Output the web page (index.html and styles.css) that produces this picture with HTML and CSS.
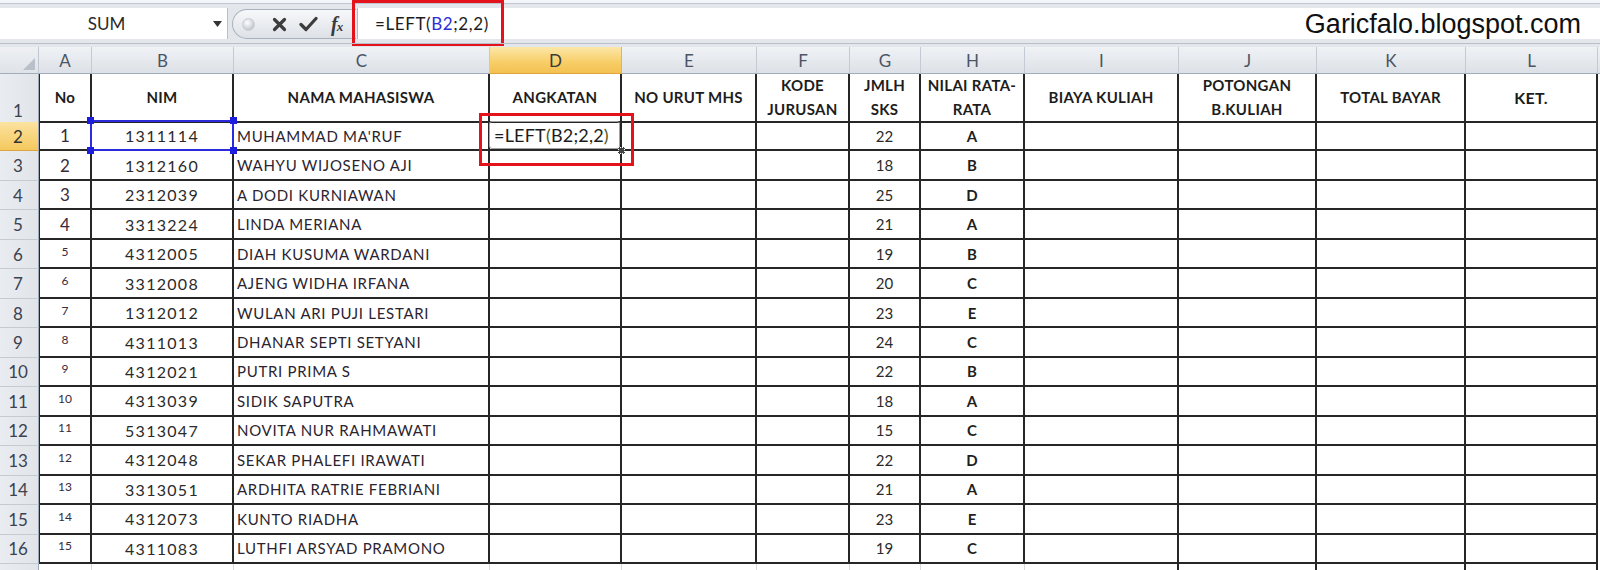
FILE: index.html
```html
<!DOCTYPE html>
<html>
<head>
<meta charset="utf-8">
<title>Excel LEFT</title>
<link rel="stylesheet" href="styles.css">
</head>
<body>
<div class="fbar">
  <div class="namebox">
    <span class="nb-text">SUM</span>
    <svg class="nb-arrow" width="9" height="6" viewBox="0 0 9 6"><path d="M0 0H9L4.5 6Z" fill="#333"/></svg>
  </div>
  <div class="pill">
    <span class="grip"></span>
    <svg class="ico" width="15" height="15" viewBox="0 0 15 15"><path d="M2.5 2.5L12.5 12.5M12.5 2.5L2.5 12.5" stroke="#3c3c3c" stroke-width="3.2" stroke-linecap="round"/></svg>
    <svg class="ico" width="19" height="16" viewBox="0 0 19 16"><path d="M2 8.5L7 13.5L17 2.5" stroke="#3c3c3c" stroke-width="3.2" fill="none" stroke-linecap="round" stroke-linejoin="round"/></svg>
    <span class="fx">f<span class="fx-x">x</span></span>
  </div>
  <div class="finput">
    <span class="ftext">=LEFT(<span class="ref">B2</span>;2,2)</span>
    <span class="brand">Garicfalo.blogspot.com</span>
  </div>
  <div class="mark mark-f"></div>
</div>

<div class="sheet">
  <div class="row hdr">
    <div class="corner"><svg width="12" height="12" viewBox="0 0 12 12"><path d="M12 0V12H0Z" fill="#b9c0c9"/></svg></div>
    <div class="ch">A</div><div class="ch">B</div><div class="ch">C</div><div class="ch sel">D</div><div class="ch">E</div><div class="ch">F</div><div class="ch">G</div><div class="ch">H</div><div class="ch">I</div><div class="ch">J</div><div class="ch">K</div><div class="ch">L</div><div class="ch end"></div>
  </div>

  <div class="row r1">
    <div class="rh bottom">1</div>
    <div class="c th first">No</div>
    <div class="c th">NIM</div>
    <div class="c th">NAMA MAHASISWA</div>
    <div class="c th">ANGKATAN</div>
    <div class="c th">NO URUT MHS</div>
    <div class="c th">KODE<br>JURUSAN</div>
    <div class="c th">JMLH<br>SKS</div>
    <div class="c th">NILAI RATA-<br>RATA</div>
    <div class="c th">BIAYA KULIAH</div>
    <div class="c th">POTONGAN<br>B.KULIAH</div>
    <div class="c th">TOTAL BAYAR</div>
    <div class="c th ket">KET.</div>
    <div class="gap"></div>
  </div>

  <div class="row rd">
    <div class="rh sel">2</div>
    <div class="c first no big">1</div>
    <div class="c nim refcell">1311114<span class="h h1"></span><span class="h h2"></span><span class="h h3"></span><span class="h h4"></span></div>
    <div class="c nm">MUHAMMAD MA'RUF</div>
    <div class="c active"><span class="editor"><span class="edit">=LEFT<span class="par">(</span>B2;2,2<span class="par">)</span></span></span><span class="fill"></span><span class="mark mark-d"></span></div>
    <div class="c"></div><div class="c"></div>
    <div class="c sks">22</div><div class="c grd">A</div>
    <div class="c"></div><div class="c"></div><div class="c"></div><div class="c"></div>
    <div class="gap"></div>
  </div>

  <div class="row rd">
    <div class="rh">3</div>
    <div class="c first no big">2</div><div class="c nim">1312160</div><div class="c nm">WAHYU WIJOSENO AJI</div>
    <div class="c"></div><div class="c"></div><div class="c"></div>
    <div class="c sks">18</div><div class="c grd">B</div>
    <div class="c"></div><div class="c"></div><div class="c"></div><div class="c"></div><div class="gap"></div>
  </div>

  <div class="row rd">
    <div class="rh">4</div>
    <div class="c first no big">3</div><div class="c nim">2312039</div><div class="c nm">A DODI KURNIAWAN</div>
    <div class="c"></div><div class="c"></div><div class="c"></div>
    <div class="c sks">25</div><div class="c grd">D</div>
    <div class="c"></div><div class="c"></div><div class="c"></div><div class="c"></div><div class="gap"></div>
  </div>

  <div class="row rd">
    <div class="rh">5</div>
    <div class="c first no big">4</div><div class="c nim">3313224</div><div class="c nm">LINDA MERIANA</div>
    <div class="c"></div><div class="c"></div><div class="c"></div>
    <div class="c sks">21</div><div class="c grd">A</div>
    <div class="c"></div><div class="c"></div><div class="c"></div><div class="c"></div><div class="gap"></div>
  </div>

  <div class="row rd">
    <div class="rh">6</div>
    <div class="c first no">5</div><div class="c nim">4312005</div><div class="c nm">DIAH KUSUMA WARDANI</div>
    <div class="c"></div><div class="c"></div><div class="c"></div>
    <div class="c sks">19</div><div class="c grd">B</div>
    <div class="c"></div><div class="c"></div><div class="c"></div><div class="c"></div><div class="gap"></div>
  </div>

  <div class="row rd">
    <div class="rh">7</div>
    <div class="c first no">6</div><div class="c nim">3312008</div><div class="c nm">AJENG WIDHA IRFANA</div>
    <div class="c"></div><div class="c"></div><div class="c"></div>
    <div class="c sks">20</div><div class="c grd">C</div>
    <div class="c"></div><div class="c"></div><div class="c"></div><div class="c"></div><div class="gap"></div>
  </div>

  <div class="row rd">
    <div class="rh">8</div>
    <div class="c first no">7</div><div class="c nim">1312012</div><div class="c nm">WULAN ARI PUJI LESTARI</div>
    <div class="c"></div><div class="c"></div><div class="c"></div>
    <div class="c sks">23</div><div class="c grd">E</div>
    <div class="c"></div><div class="c"></div><div class="c"></div><div class="c"></div><div class="gap"></div>
  </div>

  <div class="row rd">
    <div class="rh">9</div>
    <div class="c first no">8</div><div class="c nim">4311013</div><div class="c nm">DHANAR SEPTI SETYANI</div>
    <div class="c"></div><div class="c"></div><div class="c"></div>
    <div class="c sks">24</div><div class="c grd">C</div>
    <div class="c"></div><div class="c"></div><div class="c"></div><div class="c"></div><div class="gap"></div>
  </div>

  <div class="row rd">
    <div class="rh">10</div>
    <div class="c first no">9</div><div class="c nim">4312021</div><div class="c nm">PUTRI PRIMA S</div>
    <div class="c"></div><div class="c"></div><div class="c"></div>
    <div class="c sks">22</div><div class="c grd">B</div>
    <div class="c"></div><div class="c"></div><div class="c"></div><div class="c"></div><div class="gap"></div>
  </div>

  <div class="row rd">
    <div class="rh">11</div>
    <div class="c first no">10</div><div class="c nim">4313039</div><div class="c nm">SIDIK SAPUTRA</div>
    <div class="c"></div><div class="c"></div><div class="c"></div>
    <div class="c sks">18</div><div class="c grd">A</div>
    <div class="c"></div><div class="c"></div><div class="c"></div><div class="c"></div><div class="gap"></div>
  </div>

  <div class="row rd">
    <div class="rh">12</div>
    <div class="c first no">11</div><div class="c nim">5313047</div><div class="c nm">NOVITA NUR RAHMAWATI</div>
    <div class="c"></div><div class="c"></div><div class="c"></div>
    <div class="c sks">15</div><div class="c grd">C</div>
    <div class="c"></div><div class="c"></div><div class="c"></div><div class="c"></div><div class="gap"></div>
  </div>

  <div class="row rd">
    <div class="rh">13</div>
    <div class="c first no">12</div><div class="c nim">4312048</div><div class="c nm">SEKAR PHALEFI IRAWATI</div>
    <div class="c"></div><div class="c"></div><div class="c"></div>
    <div class="c sks">22</div><div class="c grd">D</div>
    <div class="c"></div><div class="c"></div><div class="c"></div><div class="c"></div><div class="gap"></div>
  </div>

  <div class="row rd">
    <div class="rh">14</div>
    <div class="c first no">13</div><div class="c nim">3313051</div><div class="c nm">ARDHITA RATRIE FEBRIANI</div>
    <div class="c"></div><div class="c"></div><div class="c"></div>
    <div class="c sks">21</div><div class="c grd">A</div>
    <div class="c"></div><div class="c"></div><div class="c"></div><div class="c"></div><div class="gap"></div>
  </div>

  <div class="row rd">
    <div class="rh">15</div>
    <div class="c first no">14</div><div class="c nim">4312073</div><div class="c nm">KUNTO RIADHA</div>
    <div class="c"></div><div class="c"></div><div class="c"></div>
    <div class="c sks">23</div><div class="c grd">E</div>
    <div class="c"></div><div class="c"></div><div class="c"></div><div class="c"></div><div class="gap"></div>
  </div>

  <div class="row rd">
    <div class="rh">16</div>
    <div class="c first no">15</div><div class="c nim">4311083</div><div class="c nm">LUTHFI ARSYAD PRAMONO</div>
    <div class="c"></div><div class="c"></div><div class="c"></div>
    <div class="c sks">19</div><div class="c grd">C</div>
    <div class="c"></div><div class="c"></div><div class="c"></div><div class="c"></div><div class="gap"></div>
  </div>

  <div class="row r17">
    <div class="rh"></div>
    <div class="g"></div><div class="g"></div><div class="g"></div><div class="g"></div><div class="g"></div><div class="g"></div><div class="g"></div><div class="g"></div>
    <div class="g dark"></div><div class="g dark"></div><div class="g dark"></div><div class="g dark"></div><div class="gap"></div>
  </div>
</div>
</body>
</html>
```

FILE: styles.css
```css
* { box-sizing: border-box; margin: 0; padding: 0; }
html, body { width: 1600px; height: 570px; overflow: hidden; background: #ffffff; }
body { font-family: Lato, "Open Sans", sans-serif; color: #1e1e1e; }

/* ---------- formula bar ---------- */
.fbar {
  position: relative;
  height: 47px;
  display: flex;
  align-items: stretch;
  background: #e3e7ec;
  border-top: 3px solid #f3f5f8;
  box-shadow: inset 0 1px 0 #bfc6cf;
  padding: 5px 0 8px 0;
}
.fbar::after {
  content: "";
  position: absolute;
  left: 0; right: 0; bottom: 3px;
  height: 1px;
  background: #b8bfc9;
}
.namebox {
  width: 228px;
  background: #ffffff;
  border-right: 1px solid #b9c0ca;
  display: flex;
  align-items: center;
}
.nb-text {
  flex: 1;
  text-align: center;
  font-size: 17px;
  color: #2a2a2a;
  padding-left: 0;
}
.nb-arrow { margin-right: 5px; }
.pill {
  width: 124px;
  margin-left: 4px;
  margin-top: 1px;
  margin-bottom: 0;
  background: linear-gradient(#f7f8fa, #dde1e6);
  border: 1px solid #a9b1bc;
  border-right: none;
  border-radius: 17px 0 0 17px;
  display: flex;
  align-items: center;
  padding-left: 9px;
}
.grip {
  width: 13px; height: 13px;
  border-radius: 50%;
  background: radial-gradient(circle at 40% 35%, #ffffff, #c5cad1 70%);
  border: 1px solid #c9ced5;
  margin-right: 17px;
}
.ico { margin-right: 12px; }
.fx {
  font-family: "Liberation Serif", "DejaVu Serif", serif;
  font-style: italic;
  font-weight: bold;
  font-size: 20px;
  color: #3a3a3a;
  letter-spacing: -1px;
  margin-left: 1px;
}
.fx-x { font-size: 13px; }
.finput {
  flex: 1;
  margin-left: 1px;
  background: #ffffff;
  border-left: 1px solid #b2bac5;
  display: flex;
  align-items: center;
  justify-content: space-between;
  padding-left: 17px;
  padding-right: 19px;
}
.ftext { font-size: 17px; color: #1c1c1c; letter-spacing: 0.6px; }
.ref { color: #2e2ed6; }
.brand {
  font-family: "Liberation Sans", Arial, sans-serif;
  font-size: 27px;
  color: #101010;
  margin-top: 2px;
}
.mark { position: absolute; border: 3px solid #e3121b; pointer-events: none; }
.mark-f { left: 352px; top: -3px; width: 152px; height: 46px; }

/* ---------- sheet grid ---------- */
.row {
  display: grid;
  grid-template-columns: 39px 53px 142px 256px 132px 135px 93px 71px 104px 154px 138px 149px 132px 2px;
}
.hdr { height: 27px; }
.r1 { height: 48px; }
.rd { height: 29.47px; }
.r17 { height: 10px; }

.corner {
  background: linear-gradient(#eef0f3, #dfe3e8);
  border-right: 1px solid #c1c7d0;
  border-bottom: 1px solid #a3adba;
  display: flex;
  align-items: flex-end;
  justify-content: flex-end;
  padding: 0 3px 3px 0;
}
.ch {
  background: linear-gradient(#f0f2f5, #dce1e7);
  border-right: 1px solid #c4cad3;
  border-bottom: 1px solid #a3adba;
  display: flex;
  align-items: center;
  justify-content: center;
  font-size: 17px;
  color: #4c5566;
}
.ch.sel {
  background: linear-gradient(#fce7a8, #f7cd66 60%, #f3c152);
  border-bottom: 1px solid #e0a53c;
  border-right-color: #e2b45a;
  color: #3b3b3b;
}
.ch.end { border-right: none; }

.rh {
  background: linear-gradient(90deg, #e9ecf0, #e1e5ea);
  border-right: 1px solid #9ea8b5;
  border-bottom: 1px solid #c5cbd3;
  display: flex;
  align-items: center;
  justify-content: center;
  font-size: 17px;
  color: #3b4250;
  padding-right: 2px;
}
.rh.bottom { align-items: flex-end; padding-bottom: 1px; }
.rh.sel {
  background: linear-gradient(#fbe3a0, #f5c85e);
  border-bottom-color: #dca445;
  color: #333;
}

.c {
  border-right: 2px solid #262626;
  border-bottom: 2px solid #262626;
  display: flex;
  align-items: center;
  justify-content: center;
  font-size: 15px;
  color: #232323;
  white-space: nowrap;
}
.c.first { border-left: 1px solid #262626; }
.th {
  font-weight: bold;
  font-size: 15px;
  letter-spacing: 0.3px;
  line-height: 23.5px;
  text-align: center;
  color: #1d1d1d;
}
.th.ket { font-size: 16px; }
.no { font-size: 12px; padding-bottom: 5px; color: #3a2a3a; }
.no.big { font-size: 17px; padding-bottom: 0; }
.nim { font-size: 16px; letter-spacing: 1.3px; color: #2a2a2a; }
.nm { justify-content: flex-start; padding-left: 3px; font-size: 15px; letter-spacing: 0.7px; color: #2b2430; }
.sks { font-size: 15px; color: #2a2a2a; }
.grd { font-weight: bold; font-size: 15px; color: #1f1f1f; }

.refcell { position: relative; }
.refcell::after {
  content: "";
  position: absolute;
  left: -2px; top: -2px; right: -2px; bottom: -2px;
  border: 2px solid #2b2bdc;
}
.h { position: absolute; width: 7px; height: 7px; background: #1d1de0; z-index: 2; }
.h1 { left: -5px; top: -5px; }
.h2 { right: -5px; top: -5px; }
.h3 { left: -5px; bottom: -5px; }
.h4 { right: -5px; bottom: -5px; }

.active {
  position: relative;
  justify-content: flex-start;
  padding: 0;
}
.editor {
  flex: 1;
  align-self: stretch;
  margin: -1px 0 0 -1px;
  border: 1px solid #a2a2a2;
  border-radius: 3px;
  display: flex;
  align-items: center;
  padding-left: 4px;
}
.edit { font-size: 18px; letter-spacing: 0.2px; color: #1c1c1c; }
.par { color: #55551e; }
.fill {
  position: absolute;
  right: -5px; bottom: -5px;
  width: 7px; height: 7px;
  background: #444;
  border: 1px dotted #fff;
}
.mark-d { left: -11px; top: -9px; width: 155px; height: 53px; }

.gap { background: #fff; }
.g { border-right: 1px solid #d9d9d9; }
.g.dark { border-right: 2px solid #262626; }
.r17 .rh { border-bottom: none; }
```
